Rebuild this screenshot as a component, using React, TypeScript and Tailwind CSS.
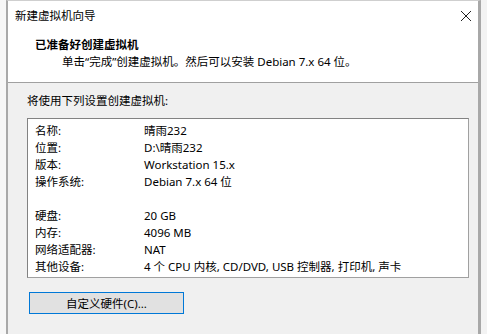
const rows: { label: string; value: string }[] = [
  { label: '名称:', value: '晴雨232' },
  { label: '位置:', value: 'D:\\晴雨232' },
  { label: '版本:', value: 'Workstation 15.x' },
  { label: '操作系统:', value: 'Debian 7.x 64 位' },
  { label: '', value: '' },
  { label: '硬盘:', value: '20 GB' },
  { label: '内存:', value: '4096 MB' },
  { label: '网络适配器:', value: 'NAT' },
  { label: '其他设备:', value: '4 个 CPU 内核, CD/DVD, USB 控制器, 打印机, 声卡' },
];

export default function App() {
  return (
    <div className="w-[487px] h-[334px] overflow-hidden flex bg-white text-[11.5px] text-black font-['Noto_Sans','Noto_Sans_CJK_SC',sans-serif]">
      <div className="w-[6px] shrink-0 bg-[#f7f7f7]" />
      {/* Dialog window */}
      <div className="w-[475px] shrink-0 flex flex-col border-l-2 border-r-[3px] border-t border-l-[#a9a9a9] border-r-[#a8a8a8] border-t-[#cfcfcf] bg-[#f0f0f0]">
        {/* Title bar + header */}
        <div className="bg-white border-b border-[#a0a0a0]">
          <div className="h-[29px] flex items-center justify-between pl-[7px] pr-[6px]">
            <span className="leading-[17px]">新建虚拟机向导</span>
            <svg width="12" height="12" viewBox="0 0 12 12">
              <path d="M1 1 L11 11 M11 1 L1 11" stroke="#222" strokeWidth="1" fill="none" />
            </svg>
          </div>
          <div className="pt-[6px] pb-[12px]">
            <div className="pl-[27px] h-[17px] leading-[17px] font-bold">已准备好创建虚拟机</div>
            <div className="pl-[54px] h-[17px] leading-[17px]">
              单击“完成”创建虚拟机。然后可以安装 Debian 7.x 64 位。
            </div>
          </div>
        </div>

        {/* Body */}
        <div className="flex flex-col pt-[9px] pl-[19px]">
          <div className="h-[17px] leading-[17px]">将使用下列设置创建虚拟机:</div>
          <div className="mt-[9px] w-[442px] h-[160px] bg-white border border-[#828282] border-r-[#a0a0a0] border-b-[#a0a0a0] pt-[3px] pl-[7px]">
            {rows.map((r, i) => (
              <div key={i} className="flex h-[17px] leading-[17px] whitespace-nowrap">
                <span className="w-[109px] shrink-0">{r.label}</span>
                <span>{r.value}</span>
              </div>
            ))}
          </div>
          <button className="mt-[14px] ml-[2px] w-[155px] h-[22px] bg-[#e1e1e1] border border-[#0078d7] flex items-center justify-center leading-[17px]">
            自定义硬件(C)...
          </button>
        </div>
      </div>
      <div className="flex-1 bg-[#f3f3f3]" />
    </div>
  );
}
